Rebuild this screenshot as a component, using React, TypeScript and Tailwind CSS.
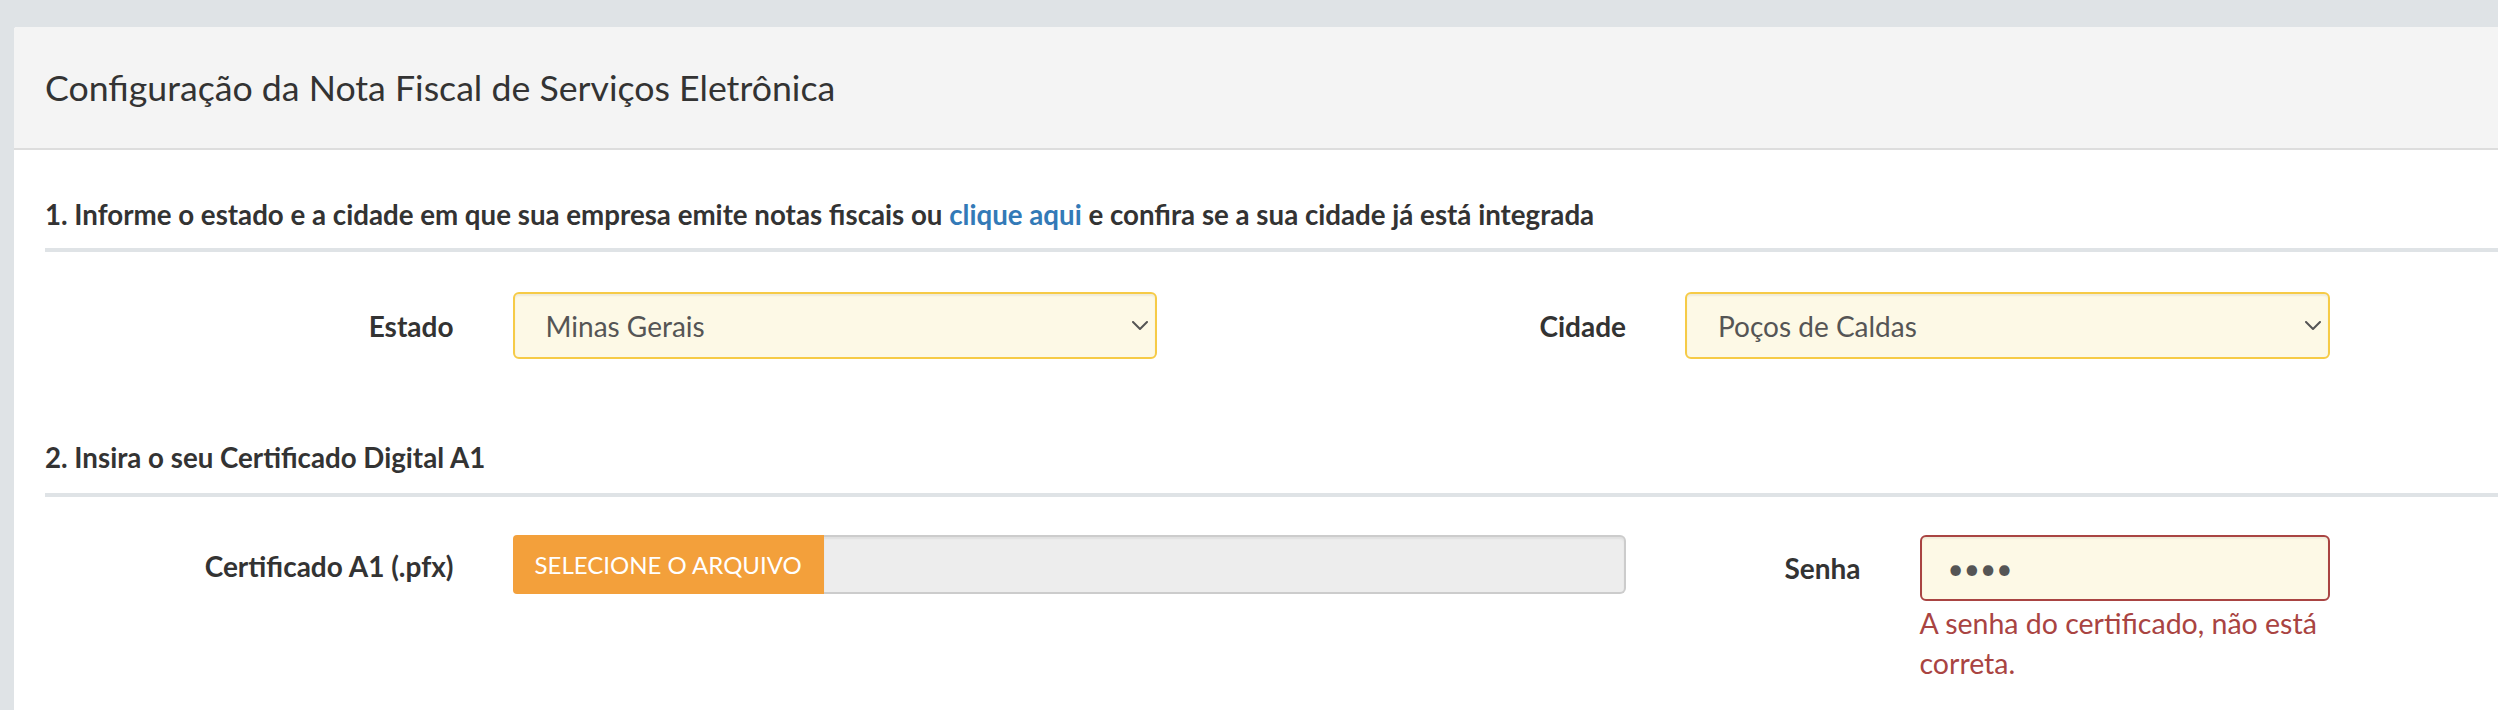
import React from "react";

const font = { fontFamily: "Lato, 'Liberation Sans', sans-serif" };

function Chevron() {
  return (
    <svg width="16" height="10" viewBox="0 0 16 10" fill="none">
      <polyline
        points="1,1 8,8 15,1"
        stroke="#555555"
        strokeWidth="2"
        strokeLinecap="round"
        strokeLinejoin="round"
      />
    </svg>
  );
}

function FakeSelect({ value }: { value: string }) {
  return (
    <div className="flex h-[67px] items-center justify-between rounded-[6px] border-2 border-[#f6cb47] bg-[#fdf9e6] pl-[31px] pr-[7px] text-[28px] text-[#555555] shadow-[inset_0_2px_2px_rgba(0,0,0,0.06)]">
      <span>{value}</span>
      <Chevron />
    </div>
  );
}

function SectionTitle({ children }: { children: React.ReactNode }) {
  return (
    <h4 className="pl-[31px] text-[27.7px] font-bold leading-[34px] text-[#333333]">
      {children}
    </h4>
  );
}

export default function App() {
  return (
    <div
      className="h-[710px] w-full overflow-hidden bg-[#dfe3e6] pt-[27px]"
      style={font}
    >
      <div className="ml-[14px] h-[800px] w-[2814px] rounded-tl-[3px] bg-white">
        {/* Panel heading */}
        <div className="flex h-[123px] items-center rounded-tl-[3px] border-b-2 border-[#dddddd] bg-[#f4f4f4] pl-[31px]">
          <h3 className="text-[35.7px] font-normal text-[#333333]">
            Configuração da Nota Fiscal de Serviços Eletrônica
          </h3>
        </div>

        <div className="pt-[48px]">
          <SectionTitle>
            1. Informe o estado e a cidade em que sua empresa emite notas fiscais ou{" "}
            <a className="cursor-pointer text-[#337ab7]">clique aqui</a> e confira se a sua
            cidade já está integrada
          </SectionTitle>
          <div className="ml-[31px] mt-[16px] h-[4px] bg-[#dfe3e6]" />

          {/* Estado / Cidade */}
          <div className="mt-[40px] grid grid-cols-12 items-center">
            <label className="col-span-2 px-[29.5px] text-right text-[28px] font-bold text-[#333333]">
              Estado
            </label>
            <div className="col-span-3 px-[29.5px]">
              <FakeSelect value="Minas Gerais" />
            </div>
            <label className="col-span-2 px-[29.5px] text-right text-[28px] font-bold text-[#333333]">
              Cidade
            </label>
            <div className="col-span-3 px-[29.5px]">
              <FakeSelect value="Poços de Caldas" />
            </div>
          </div>

          <div className="mt-[82px]">
            <SectionTitle>2. Insira o seu Certificado Digital A1</SectionTitle>
          </div>
          <div className="ml-[31px] mt-[18px] h-[4px] bg-[#dfe3e6]" />

          {/* Certificado / Senha */}
          <div className="mt-[38px] grid grid-cols-12 items-start">
            <label className="col-span-2 px-[29.5px] pt-[14px] text-right text-[28px] font-bold leading-[34px] text-[#333333]">
              Certificado A1 (.pfx)
            </label>
            <div className="col-span-5 px-[29.5px]">
              <div className="flex h-[59px]">
                <button className="flex items-center rounded-l-[4px] bg-[#f3a03b] px-[22px] text-[24px] uppercase text-white">
                  Selecione o arquivo
                </button>
                <div className="flex-1 rounded-r-[6px] border-2 border-l-0 border-[#cccccc] bg-[#ededed] shadow-[inset_0_2px_2px_rgba(0,0,0,0.06)]" />
              </div>
            </div>
            <label className="col-span-1 px-[29.5px] pt-[16px] text-right text-[28px] font-bold leading-[34px] text-[#333333]">
              Senha
            </label>
            <div className="col-span-2 px-[29.5px]">
              <div className="flex h-[66px] items-center rounded-[6px] border-2 border-[#a94442] bg-[#fdf9e6] pl-[26px] text-[28px] text-[#555555] shadow-[inset_0_2px_2px_rgba(0,0,0,0.06)]">
                ••••
              </div>
              <p className="mt-[2px] text-[28.5px] leading-[40px] text-[#a94442]">
                A senha do certificado, não está correta.
              </p>
            </div>
          </div>
        </div>
      </div>
    </div>
  );
}
